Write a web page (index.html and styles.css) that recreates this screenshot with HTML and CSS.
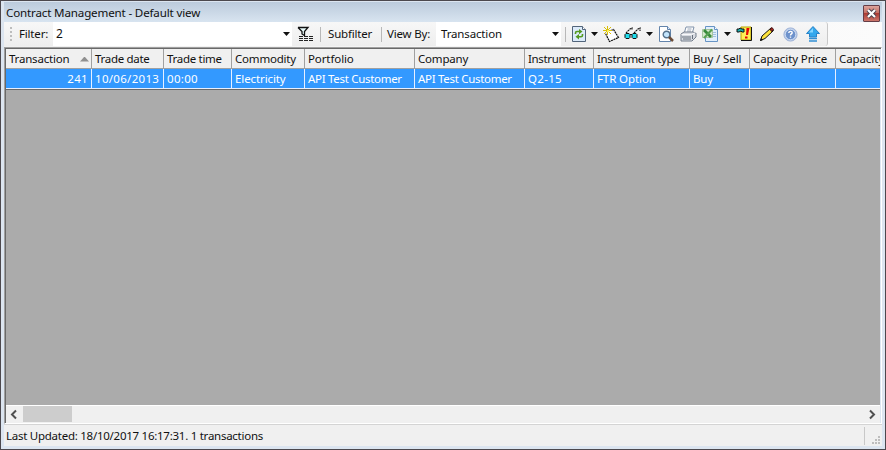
FILE: index.html
```html
<!DOCTYPE html>
<html lang="en">
<head>
<meta charset="utf-8">
<title>Contract Management</title>
<link rel="stylesheet" href="styles.css">
</head>
<body>
<div class="window">
  <header class="titlebar"><span class="title">Contract Management - Default view</span>
    <button class="close" aria-label="Close"><svg width="15" height="15" viewBox="0 0 15 15"><path d="M4 4l7 7M11 4l-7 7" stroke="#49404b" stroke-width="4"/><path d="M4 4l7 7M11 4l-7 7" stroke="#fff" stroke-width="2.2"/></svg></button>
  </header>
  <div class="toolbar-area"><nav class="toolbar">
    <i class="grip"></i><span class="label filter">Filter:</span>
    <div class="combo filter-combo"><span>2</span><i class="caret"></i></div>
    <svg class="icon funnel" width="17" height="16" viewBox="0 0 17 16"><path d="M1 1.5h10L7.5 5.5v4L5 8V5.5L1 1.5" fill="#e7fafa" stroke="#111" stroke-width="1.3"/><path d="M2 10.5h15M2 12.5h15M2 14.5h15" stroke="#222" stroke-dasharray="4 1"/></svg>
    <i class="sep"></i><span class="label subfilter">Subfilter</span><i class="sep"></i><span class="label viewby">View By:</span>
    <div class="combo view-combo"><span class="transaction">Transaction</span><i class="caret"></i></div><i class="sep last-sep"></i>
    <svg class="icon refresh" width="14" height="16" viewBox="0 0 14 16"><path d="M.5.5h10l3 3v12H.5z" fill="#dcebfa" stroke="#52657b"/><path d="M10.5.5v3h3" fill="#fff" stroke="#52657b"/><path d="M3.5 8V7Q3.5 5.5 5 5.5h3M10.5 8v1.200q0 1.500-1.500 1.500H6" fill="none" stroke="#559a20" stroke-width="1.6"/><path d="M7 3l3.500 2.600L7 8.300zM7 8L3.500 10.700 7 13.400z" fill="#559a20"/></svg><i class="caret"></i>
    <svg class="icon note" width="17" height="17" viewBox="0 0 17 17"><path d="M3.500 7L10.500 3.500 15.500 11.500 6.500 15.500z" fill="#fff"/><path d="M8 4.500l2.500-1 5 8-9 4-4-8" fill="none" stroke="#111" stroke-width="1.2" stroke-dasharray="2 .6"/><path d="M4.500 0v9M0 4.500h9M1 1l7 7M8 1L1 8" stroke="#d9c00b"/><path d="M4 4h2v2H4z" fill="#fff457"/></svg>
    <svg class="icon glasses" width="18" height="14" viewBox="0 0 18 14"><path d="M2 6l4-4 2-1v2M10 6l4-4 2-1v3M6 7.500h3" fill="none" stroke="#111" stroke-width="1.100" stroke-dasharray="2 .5"/><path d="M2 6.500h3l1 1v3l-1 1H2l-1-1v-3zM9 6.500h3l1 1v3l-1 1H9l-1-1v-3z" fill="#20dcec" stroke="#111"/></svg><i class="caret"></i>
    <svg class="icon preview" width="17" height="17" viewBox="0 0 17 17"><path d="M1.500.5h8l3 3v12h-11z" fill="#fff" stroke="#6384ab"/><path d="M9.500.5v3h3" fill="#dceaff" stroke="#6384ab"/><circle cx="8.500" cy="8.500" r="3.300" fill="#c3e5fc" stroke="#56728c" stroke-width="1.400"/><path d="M11 11l4 4" stroke="#6b4c37" stroke-width="2.500"/></svg>
    <svg class="icon printer" width="17" height="16" viewBox="0 0 17 16"><path d="M4 8l2-7h8l-2 7" fill="#fff" stroke="#8092aa"/><path d="M7.500 3h4M7 5h4" stroke="#9aa6b8"/><path d="M1 8l3-2h9l3 1v4l-4 4H1z" fill="#d8dbe1" stroke="#747e8c"/><path d="M1.500 8.500h10l4-2" fill="none" stroke="#f8f8fa"/><path d="M2 11h9M3 13h8M12.500 9v4" stroke="#66707d"/></svg>
    <svg class="icon excel" width="16" height="16" viewBox="0 0 16 16"><path d="M3.500.5h9l3 3v12h-12z" fill="#e1effc" stroke="#6794c5"/><path d="M12.500.5v3h3" fill="#fff" stroke="#6794c5"/><path d="M10 6.500h4M10 8.500h4M10 10.500h4" stroke="#a1c0de"/><path d="M.5 3.500h10v8H.5z" fill="#d6e8ce" stroke="#a5c5a0"/><path d="M2 4l7 7" stroke="#388a3b" stroke-width="2.800"/><path d="M10 3.500L2 12" stroke="#57a052" stroke-width="2"/></svg><i class="caret"></i>
    <svg class="icon contexthelp" width="17" height="16" viewBox="0 0 17 16"><path d="M5 1h10v13H5z" fill="#ffef55" stroke="#b7a200"/><path d="M5 14.500h10.500V1" fill="none" stroke="#111"/><path d="M1 3h2l1-1 2 1h2v3H6L5 5 3 6H1z" fill="#1bafaf" stroke="#111"/><path d="M10.500 2h3L12 9h-2zM9 10.500h2.500v2H9z" fill="#e50805"/></svg>
    <svg class="icon pencil" width="16" height="16" viewBox="0 0 16 16"><path d="M1.500 14.500l1.500-4.500 9-8 2.500 2.500-8.500 8z" fill="#ffe43b" stroke="#111"/><path d="M11 3l2-1.500 1.500 2-2 2z" fill="#a02a22" stroke="#411"/><path d="M1 15l1-3 2 2z" fill="#111"/></svg>
    <svg class="icon help" width="15" height="15" viewBox="0 0 15 15"><circle cx="7.500" cy="7.500" r="6.600" fill="#b8c9e6" stroke="#a0b4d8"/><circle cx="7.500" cy="7.500" r="5.200" fill="#6d92cc" stroke="#dfe9f8" stroke-width=".7"/><path d="M5.800 6c0-2.400 3.800-2 3.300 0-.2.9-1.600 1-1.600 2.400M7.500 9.500v1.300" fill="none" stroke="#fff" stroke-width="1.400"/></svg>
    <svg class="icon up" width="16" height="17" viewBox="0 0 16 17"><path d="M8 .5l6.500 7H11.500V11h-7V7.500h-3z" fill="#33a8ed" stroke="#2782c8"/><path d="M8 2L4 6.500h4z" fill="#86d6ff"/><path d="M4 12.500h8M4 15h8" stroke="#318fd3" stroke-width="1.600"/></svg>
  </nav></div>
  <main class="grid-wrap">
    <div class="row head"><span class="cell"><b class="t0">Transaction</b><i class="sort"></i></span><span class="cell"><b class="t1">Trade date</b></span><span class="cell"><b class="t1">Trade time</b></span><span class="cell"><b class="t0">Commodity</b></span><span class="cell"><b class="t3">Portfolio</b></span><span class="cell"><b class="t0">Company</b></span><span class="cell"><b class="t2">Instrument</b></span><span class="cell"><b class="t2">Instrument type</b></span><span class="cell"><b class="t3">Buy / Sell</b></span><span class="cell"><b class="t3">Capacity Price</b></span><span class="cell"><b class="t3">Capacity</b></span></div>
    <div class="row data"><span class="cell number"><b class="num">241</b></span><span class="cell"><b class="num">10/06/2013</b></span><span class="cell"><b class="num">00:00</b></span><span class="cell"><b class="t3">Electricity</b></span><span class="cell"><b class="t1">API Test Customer</b></span><span class="cell"><b class="t1">API Test Customer</b></span><span class="cell"><b class="num">Q2-15</b></span><span class="cell"><b class="t3">FTR Option</b></span><span class="cell"><b class="t0">Buy</b></span><span class="cell"></span><span class="cell"></span></div>
    <div class="empty"></div>
    <div class="scroll"><svg width="17" height="17" viewBox="0 0 17 17"><path d="M10 4.500l-4 4 4 4" fill="none" stroke="#505050" stroke-width="2"/></svg><i class="thumb"></i><svg class="right" width="18" height="17" viewBox="0 0 18 17"><path d="M8 4.500l4 4-4 4" fill="none" stroke="#505050" stroke-width="2"/></svg></div>
  </main>
  <footer class="status"><span class="updated">Last Updated: 18/10/2017 16:17:31. 1 transactions</span><i class="status-sep"></i><svg width="9" height="9" viewBox="0 0 9 9"><path d="M6 0h2v2H6zM3 3h2v2H3zM6 3h2v2H6zM0 6h2v2H0zM3 6h2v2H3zM6 6h2v2H6z" fill="#bdbdbd"/></svg></footer>
</div>
</body>
</html>
```
FILE: styles.css
```css
* { box-sizing: border-box; }
body { margin: 0; width: 886px; height: 450px; overflow: hidden; font: 12px/16px "Noto Sans", "Open Sans", sans-serif; color: #111; }
b { font-weight: 400; }
i { display: block; flex-shrink: 0; }
svg { display: block; flex-shrink: 0; }
.window { width: 886px; height: 450px; border: 1px solid #4c484d; background: #dce5f0; padding: 1px 3px 2px; display: flex; flex-direction: column; }
.titlebar { height: 20px; flex: none; display: flex; justify-content: space-between; align-items: center; padding: 2px 2px 0 2px; background: linear-gradient(#bccbdc, #d8e4f0); }
.title { font-size: 11.6px; letter-spacing: -.16px; white-space: nowrap; }
.close { width: 17px; height: 17px; margin-top: 1px; padding: 0; border: 1px solid #653e47; border-radius: 1px; background: linear-gradient(#dda49c, #c56d61 48%, #ad3d35 50%, #cc766b); overflow: hidden; }
.close svg { width: 15px; height: 15px; }
.toolbar-area { height: 25px; flex: none; background: linear-gradient(90deg, #f0f0f0, #fbfbfb); }
.toolbar { width: 824px; height: 24px; display: flex; align-items: center; background: linear-gradient(#f7f7f7, #eee); border-right: 1px solid #c8c8c8; border-radius: 0 3px 3px 0; }
.grip { width: 2px; height: 14px; margin: 0 7px 0 6px; background: repeating-linear-gradient(#bdbdbd 0 2px, transparent 2px 4px); }
.label { white-space: nowrap; flex: none; font-size: 11.5px; letter-spacing: -.18px; }
.filter { width: 34px; }
.combo { height: 24px; flex: none; display: flex; align-items: center; justify-content: space-between; background: #fff; padding: 0 3px; }
.filter-combo { width: 239px; }
.view-combo { width: 125px; padding-left: 5px; }
.transaction { font-size: 11.5px; letter-spacing: -.15px; }
.caret { width: 7px; height: 4px; margin: 0 -1px; background: #111; clip-path: polygon(0 0, 100% 0, 50% 100%); }
.funnel { margin: 0 6px 0 5px; }
.sep { width: 1px; height: 15px; background: #b8b8b8; }
.subfilter { width: 53px; padding-left: 7px; margin-right: 7px; }
.viewby { width: 54px; padding-left: 5px; }
.last-sep { margin: 0 6px 0 4px; }
.refresh { margin-right: 6px; }
.note { margin: 0 4px 0 6px; }
.glasses { margin-right: 5px; }
.preview { margin: 0 5px 0 6px; }
.printer { margin-right: 5px; }
.excel { margin-right: 7px; }
.contexthelp { margin: 0 6px; }
.pencil { margin-right: 8px; }
.help { margin-right: 7px; }
.grid-wrap { height: 377px; flex: none; border: 1px solid; border-color: #a0a0a0 #fff #fff #a0a0a0; box-shadow: inset 1px 1px #696969; padding: 1px 1px 0; display: flex; flex-direction: column; }
.row { display: grid; grid-template-columns: 86px 72px 68px 73px 110px 110px 69px 96px 60px 86px 45px; height: 20px; flex: none; overflow: hidden; border-bottom: 1px solid #a0a0a0; background: #f0f0f0; }
.cell { min-width: 0; overflow: hidden; white-space: nowrap; padding: 1px 0 0 3px; border-right: 1px solid #a0a0a0; display: flex; align-items: center; font-size: 11.5px; }
.cell:last-child { border-right: 0; }
.t0 { letter-spacing: -.2px; }
.t1 { letter-spacing: -.3px; }
.t2 { letter-spacing: -.35px; }
.t3 { letter-spacing: -.1px; }
.num { letter-spacing: .3px; }
.sort { width: 9px; height: 5px; background: #909090; clip-path: polygon(50% 0, 100% 100%, 0 100%); margin: 0 2px 0 auto; }
.data { color: #fff; background: #3399ff; border-bottom-color: #e7efff; }
.data .cell { border-right-color: #e7efff; }
.number { justify-content: flex-end; padding-right: 3px; }
.empty { flex: 1; background: #ababab; border-top: 1px solid #696969; }
.scroll { height: 18px; flex: none; display: flex; border-top: 1px solid #fff; background: #f0f0f0; }
.thumb { width: 49px; height: 16px; background: #cdcdcd; }
.right { margin-left: auto; }
.status { height: 22px; flex: none; background: #f0f0f0; border-top: 1px solid #d4d4d4; display: flex; align-items: center; padding: 1px 1px 0 2px; white-space: nowrap; }
.updated { font-size: 11.5px; letter-spacing: -.26px; }
.status-sep { width: 1px; height: 18px; margin: 0 7px 0 auto; background: #c8c8c8; }
.status svg { align-self: flex-end; margin-bottom: 1px; }
```
